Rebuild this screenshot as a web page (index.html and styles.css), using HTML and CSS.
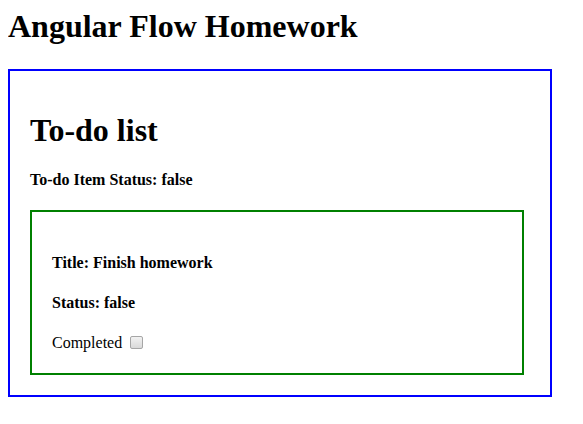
FILE: index.html
```html
<!DOCTYPE html>
<html>
<head>
<meta charset="utf-8">
<title>Angular Flow Homework</title>
<link rel="stylesheet" href="styles.css">
</head>
<body class="page">
  <h1 class="app-title">Angular Flow Homework</h1>
  <div class="todo-list">
    <h1 class="list-title">To-do list</h1>
    <h4 class="list-status">To-do Item Status: false</h4>
    <div class="todo-item">
      <h4 class="item-line">Title: Finish homework</h4>
      <h4 class="item-line">Status: false</h4>
      <div class="item-complete">
        <label class="complete-label">Completed <input class="complete-box" type="checkbox"></label>
      </div>
    </div>
  </div>
</body>
</html>
```

FILE: styles.css
```css
.page {
  margin: 8px;
  font-family: "Liberation Serif", "Times New Roman", serif;
  font-size: 16px;
  color: #000;
  background: #fff;
}

.app-title {
  font-size: 32px;
  line-height: 37px;
  margin: 0 0 24px 0;
  font-weight: bold;
}

.todo-list {
  width: 500px;
  padding: 20px;
  border: 2px solid #0000ff;
}

.list-title {
  font-size: 32px;
  line-height: 37px;
  margin: 21px 0 21px 0;
  font-weight: bold;
}

.list-status {
  font-size: 16px;
  line-height: 19px;
  margin: 21px 0;
  font-weight: bold;
}

.todo-item {
  width: 90%;
  padding: 20px;
  border: 2px solid #008000;
}

.item-line {
  font-size: 16px;
  line-height: 19px;
  margin: 21px 0;
  font-weight: bold;
}

.item-complete {
  line-height: 20px;
}

.complete-label {
  font-size: 16px;
}

.complete-box {
  appearance: none;
  -webkit-appearance: none;
  box-sizing: border-box;
  width: 13px;
  height: 13px;
  margin: 0 3px 0 4px;
  border: 1px solid #a6a6a6;
  border-radius: 2px;
  background: linear-gradient(#f2f2f2, #d9d9d9);
  vertical-align: -1px;
}
```
